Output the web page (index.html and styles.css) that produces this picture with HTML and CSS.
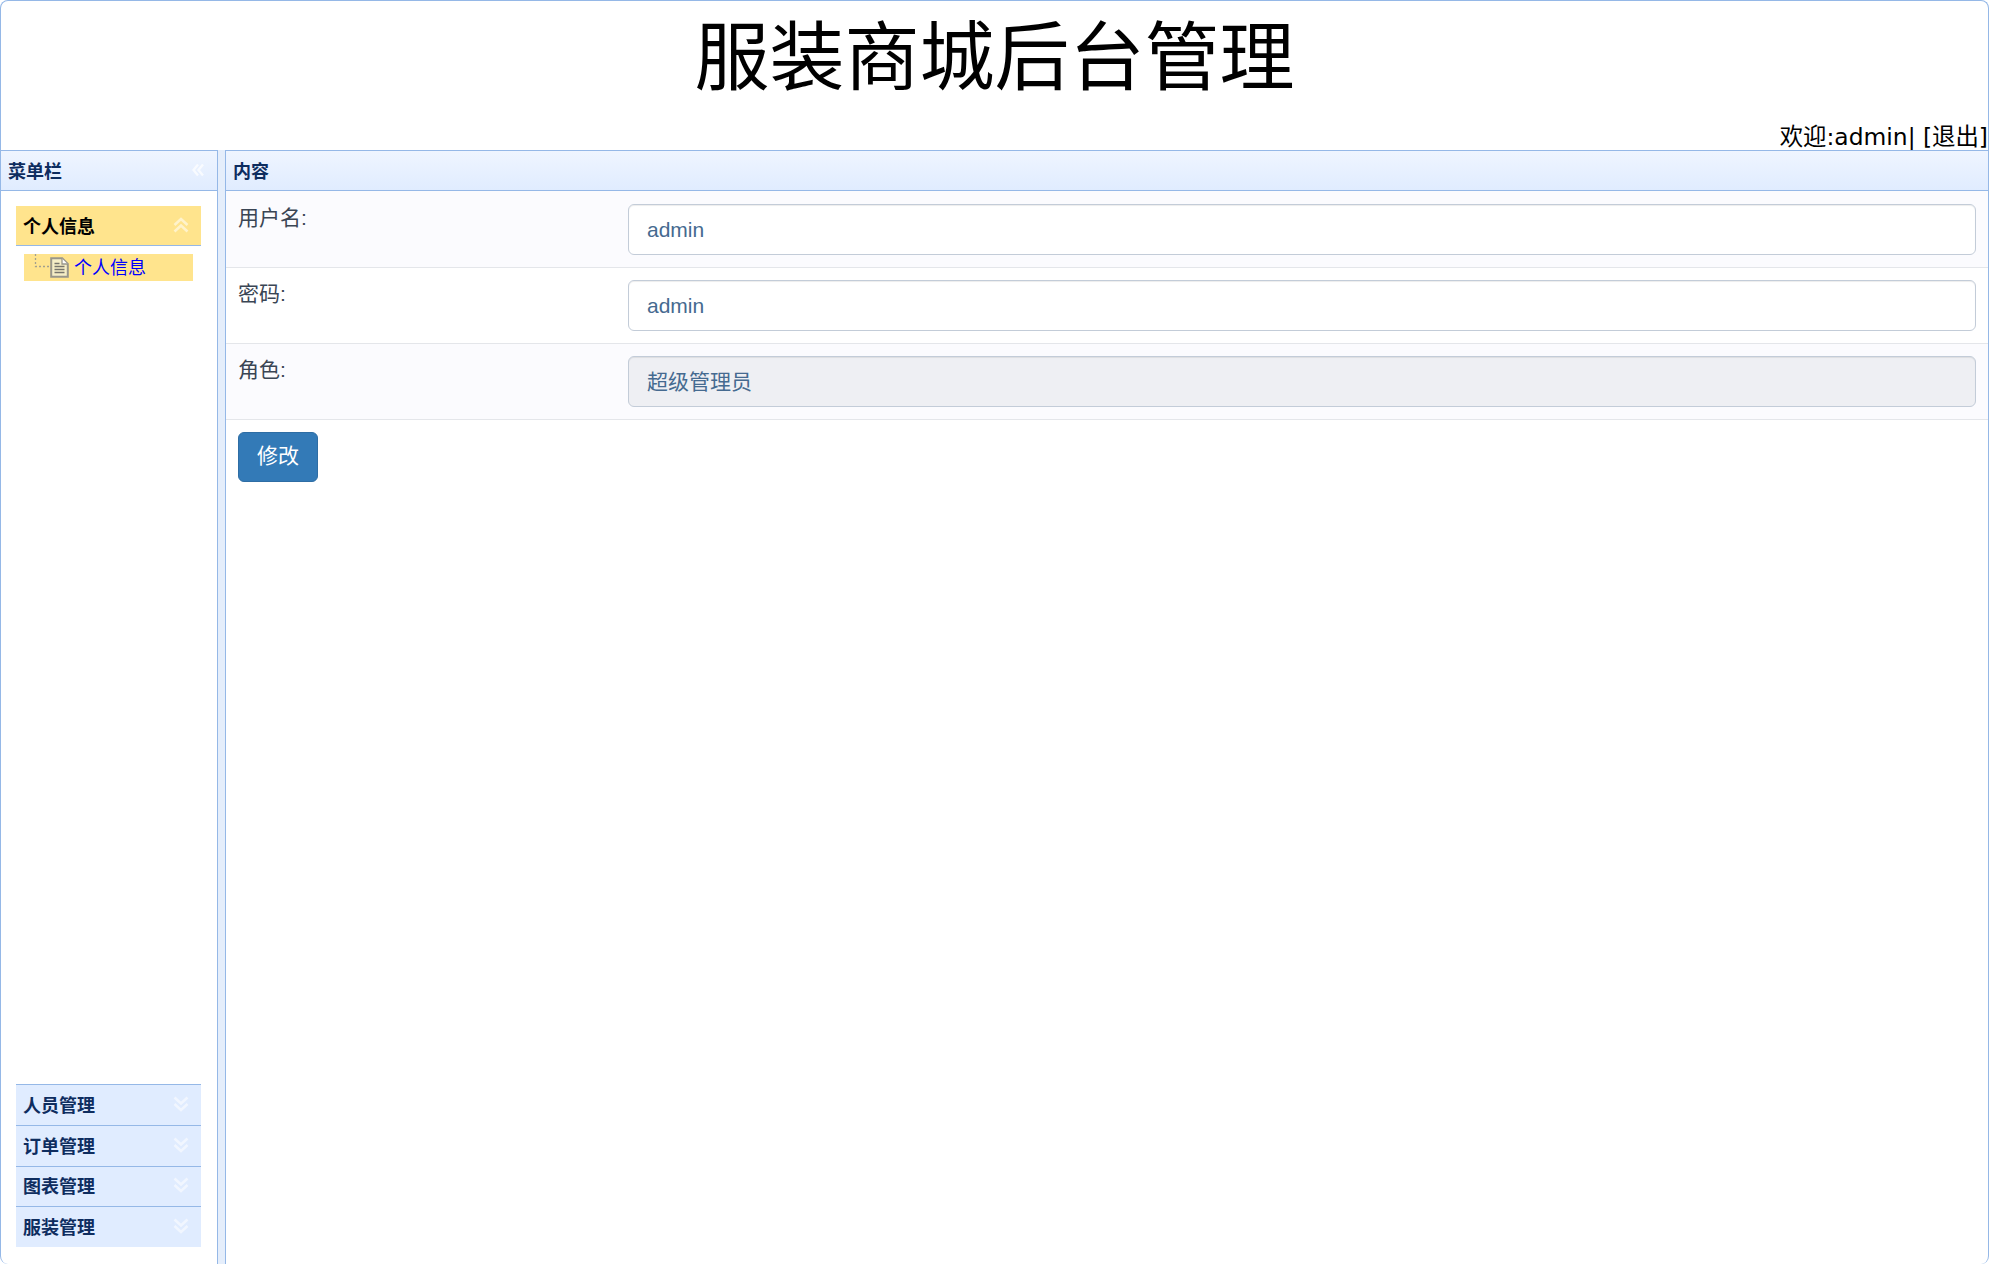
FILE: index.html
```html
<!DOCTYPE html>
<html lang="zh">
<head>
<meta charset="utf-8">
<title>服装商城后台管理</title>
<link rel="stylesheet" href="styles.css">
</head>
<body>
<div class="app">
  <header class="top">
    <h1 class="brand">服装商城后台管理</h1>
    <div class="welcome">欢迎:admin| [退出]</div>
  </header>
  <div class="main">
    <aside class="west">
      <div class="panel-head">
        <span class="panel-title">菜单栏</span>
        <svg class="collapse" viewBox="0 0 12 14" width="12" height="14"><path d="M6 1.5 1.5 7 6 12.5M11 1.5 6.5 7l4.5 5.5" fill="none" stroke="#fff" stroke-opacity=".7" stroke-width="2.4"/></svg>
      </div>
      <div class="west-body">
        <div class="accordion-top">
          <div class="acc-head acc-open">
            <span>个人信息</span>
            <svg class="chev" viewBox="0 0 16 16" width="16" height="16"><path d="M1.5 8 8 2l6.500 6M1.500 14.500 8 8.500l6.500 6" fill="none" stroke="#fff" stroke-opacity=".55" stroke-width="2.6"/></svg>
          </div>
          <div class="tree-item">
            <svg class="tree-line" viewBox="0 0 16 14" width="16" height="14"><path d="M1.500 0v12.500H16" fill="none" stroke="#a3a08e" stroke-width="1.300" stroke-dasharray="2 2"/></svg>
            <svg class="file" viewBox="0 0 19 21" width="19" height="21"><path d="M1.200 1.200h11l5.600 5.600v13H1.200z" fill="#f6eec6" stroke="#99968a" stroke-width="2"/><path d="M12 1.500v5.500h5.500" fill="#fff" stroke="#99968a" stroke-width="1.300"/><path d="M4.500 6.500h5M4.500 9.500h10M4.500 12.500h10M4.500 15.500h10" stroke="#77756c" stroke-width="1.300"/></svg>
            <a class="tree-link" href="#">个人信息</a>
          </div>
        </div>
        <div class="accordion-bottom">
          <div class="acc-head"><span>人员管理</span><svg class="chev" viewBox="0 0 16 16" width="16" height="16"><path d="M1.500 1.500 8 7.500l6.500-6M1.500 8 8 14l6.500-6" fill="none" stroke="#fff" stroke-opacity=".55" stroke-width="2.600"/></svg></div>
          <div class="acc-head"><span>订单管理</span><svg class="chev" viewBox="0 0 16 16" width="16" height="16"><path d="M1.500 1.500 8 7.500l6.500-6M1.500 8 8 14l6.500-6" fill="none" stroke="#fff" stroke-opacity=".55" stroke-width="2.600"/></svg></div>
          <div class="acc-head"><span>图表管理</span><svg class="chev" viewBox="0 0 16 16" width="16" height="16"><path d="M1.500 1.500 8 7.500l6.500-6M1.500 8 8 14l6.500-6" fill="none" stroke="#fff" stroke-opacity=".55" stroke-width="2.600"/></svg></div>
          <div class="acc-head"><span>服装管理</span><svg class="chev" viewBox="0 0 16 16" width="16" height="16"><path d="M1.500 1.500 8 7.500l6.500-6M1.500 8 8 14l6.500-6" fill="none" stroke="#fff" stroke-opacity=".55" stroke-width="2.600"/></svg></div>
        </div>
      </div>
    </aside>
    <div class="splitter"></div>
    <section class="center">
      <div class="panel-head"><span class="panel-title">内容</span></div>
      <form class="form">
        <div class="row stripe">
          <label class="field-label">用户名:</label>
          <input class="input" type="text" value="admin">
        </div>
        <div class="row">
          <label class="field-label">密码:</label>
          <input class="input" type="text" value="admin">
        </div>
        <div class="row stripe">
          <label class="field-label">角色:</label>
          <input class="input input-disabled" type="text" value="超级管理员" disabled>
        </div>
        <div class="actions"><button class="btn" type="button">修改</button></div>
      </form>
    </section>
  </div>
</div>
</body>
</html>
```
FILE: styles.css
```css
* { box-sizing: border-box; }
html, body { margin: 0; padding: 0; height: 100%; background: #fff; overflow: hidden; }
body { font-family: "Liberation Sans", "Noto Sans CJK SC", sans-serif; color: #000; }

.app {
  height: 1264px;
  display: flex;
  flex-direction: column;
  border: 1px solid #95b8e7;
  border-bottom: 0;
  border-radius: 8px;
  overflow: hidden;
}

.top { height: 149px; flex: none; display: flex; flex-direction: column; }
.brand {
  margin: 0;
  padding-top: 8px;
  height: 120px;
  font-size: 75px;
  line-height: 98px;
  font-weight: 400;
  text-align: center;
  font-family: "Liberation Sans", "Noto Sans CJK SC", sans-serif;
}
.welcome {
  height: 29px;
  line-height: 33px;
  text-align: right;
  font-size: 23.4px;
  white-space: nowrap;
  font-family: "DejaVu Sans", "Noto Sans CJK SC", sans-serif;
}

.main { flex: 1; display: flex; min-height: 0; }

.panel-head {
  height: 41px;
  flex: none;
  display: flex;
  align-items: center;
  justify-content: space-between;
  padding: 0 13px 2px 7px;
  background: linear-gradient(to bottom, #eff5ff, #e0ecff);
  border-top: 1px solid #95b8e7;
  border-bottom: 1px solid #95b8e7;
}
.panel-title { font-size: 18px; font-weight: 700; color: #0e2d5f; font-family: "Noto Sans CJK SC", sans-serif; }

.west { width: 216px; flex: none; display: flex; flex-direction: column; }
.west-body {
  flex: 1;
  display: flex;
  flex-direction: column;
  justify-content: space-between;
  padding: 15px 16px 17px 15px;
}
.acc-head {
  height: 40.7px;
  display: flex;
  align-items: center;
  justify-content: space-between;
  padding: 0 12px 2px 7px;
  background: #e0ecff;
  border-top: 1px solid #95b8e7;
  font-size: 18px;
  font-weight: 700;
  color: #0e2d5f;
  font-family: "Noto Sans CJK SC", sans-serif;
}
.acc-open {
  height: 40px;
  background: #ffe48d;
  color: #000;
  border-top: 0;
  border-bottom: 1px solid #95b8e7;
}
.tree-item {
  display: flex;
  align-items: center;
  height: 27px;
  margin: 8px 8px 0;
  padding-left: 10px;
  background: #ffe48d;
}
.tree-line { align-self: flex-start; flex: none; }
.file { flex: none; }
.tree-link {
  margin: 0 0 3px 5px;
  font-size: 18px;
  color: #00f;
  text-decoration: none;
  font-family: "Noto Sans CJK SC", sans-serif;
}

.splitter {
  width: 9px;
  flex: none;
  background: #e5eefb;
  border-left: 1px solid #95b8e7;
  border-right: 1px solid #95b8e7;
}

.center { flex: 1; min-width: 0; display: flex; flex-direction: column; }
.form { flex: 1; }
.row {
  height: 76px;
  display: flex;
  align-items: flex-start;
  padding: 12px 12px 0;
  border-bottom: 1px solid #e4e6ea;
}
.row:first-child { height: 77px; padding-top: 13px; }
.stripe { background: #fbfbfe; }
.field-label {
  width: 390px;
  flex: none;
  font-size: 21px;
  line-height: 27px;
  color: #3a4554;
}
.input {
  flex: 1;
  min-width: 0;
  height: 51px;
  padding: 0 18px;
  font: 21px "Liberation Sans", "Noto Sans CJK SC", sans-serif;
  color: #456a90;
  background: #fff;
  border: 1px solid #c3ccd8;
  border-radius: 6px;
  box-shadow: inset 0 1px 1px rgba(0,0,0,.075);
  outline: 0;
}
.input-disabled { background: #eeeff3; padding-bottom: 3px; }
.actions { padding: 12px; }
.btn {
  display: block;
  width: 80px;
  height: 50px;
  font: 21px/44px "Liberation Sans", "Noto Sans CJK SC", sans-serif;
  color: #fff;
  background: #337ab7;
  border: 1px solid #2e6da4;
  border-radius: 6px;
  padding: 0 0 3px;
}
```
